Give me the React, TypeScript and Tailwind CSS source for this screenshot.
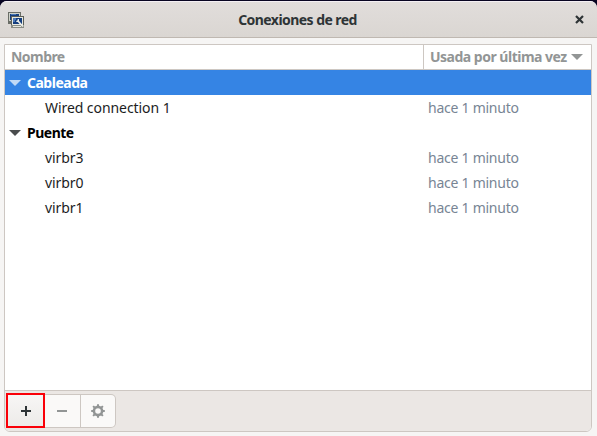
function Triangle({ className }: { className: string }) {
  return (
    <svg width="12" height="6" viewBox="0 0 12 6" className={className} fill="currentColor">
      <path d="M0 0h12L6 6z" />
    </svg>
  );
}

function NetworkIcon() {
  return (
    <svg width="16" height="16" viewBox="0 0 16 16">
      <path fill="#6a6d66" d="M0 0h13v10H3v2H0z" />
      <path fill="#cfd2ca" d="M1 1h11v8H1z" />
      <path fill="#153e7e" d="M2 2h9v6H2z" />
      <path fill="#4a78b8" d="M3 2h5v1H3z" />
      <path fill="#5c5f58" d="M3 4h13v9H3z" />
      <path fill="#8a8d85" d="M3 13h13v3H3z" />
      <path fill="#e6e8e1" d="M4 5h11v8H4zM5 14h8v1H5z" />
      <path fill="#153e7e" d="M5 6h9v6H5z" />
      <path fill="#4a78b8" d="M5 6h3v2H7v2H5z" />
      <path fill="none" stroke="#eef0ea" strokeWidth="1.8" d="M9.5 8.5l5.5 6" />
      <path fill="none" stroke="#eef0ea" strokeWidth="1.3" d="M8.3 9.3h2V7" />
    </svg>
  );
}

function GearIcon() {
  return (
    <svg width="14" height="14" viewBox="-7 -7 14 14" fill="none" stroke="#929595">
      <circle r="4.1" strokeWidth="2.6" />
      <path
        strokeWidth="2"
        d="M0-4.5V-6.8M0 4.5V6.8M-4.5 0H-6.8M4.5 0H6.8M-3.2-3.2l-1.7-1.7M3.2-3.2l1.7-1.7M-3.2 3.2l-1.7 1.7M3.2 3.2l1.7 1.7"
      />
    </svg>
  );
}

function Group({ name, selected }: { name: string; selected?: boolean }) {
  return (
    <div className={`flex h-[25px] items-center pl-1 font-bold ${selected ? "bg-[#3584e4] text-white" : "text-black"}`}>
      <Triangle className={selected ? "text-[#c0d9f6]" : "text-[#4a4d4e]"} />
      <span className="ml-[6px] tracking-[-0.5px]">{name}</span>
    </div>
  );
}

function Connection({ name }: { name: string }) {
  return (
    <div className="flex h-[25px] items-center">
      <span className="w-[423px] pl-10 tracking-[-0.07px]">{name}</span>
      <span className="tracking-[-0.25px] text-[#788594]">hace 1 minuto</span>
    </div>
  );
}

export default function App() {
  return (
    <div className="h-[436px] w-[597px] overflow-hidden bg-[#080421] pt-px font-['Noto_Sans','Open_Sans',sans-serif] text-[14px] text-[#1b1d1e]">
      <div className="h-[435px] overflow-hidden rounded-t-[7px] bg-[#f6f5f4]">
        <header className="grid h-[37px] grid-cols-[40px_1fr_40px] items-center border-t border-b border-t-[#f4eff4] border-b-[#bfb8b1] bg-linear-to-b from-[#e1dddb] to-[#dad6d2]">
          <div className="pl-2"><NetworkIcon /></div>
          <h1 className="pr-[2px] text-center font-bold tracking-[-0.55px] text-[#2e3436]">Conexiones de red</h1>
          <div className="flex justify-end pr-[13px]">
            <svg width="9" height="9" viewBox="0 0 9 9" stroke="#2e3436" strokeWidth="2.2"><path d="M1 1l7 7M8 1L1 8" /></svg>
          </div>
        </header>

        <main className="mx-1 mt-[6px] flex h-[388px] w-[588px] flex-col overflow-hidden rounded-b-[6px] border border-[#cdc7c2] bg-white">
          <div className="flex h-[25px] shrink-0 border-b border-[#cdc7c2] font-bold text-[#929595]">
            <div className="flex w-[419px] items-center border-r border-[#cdc7c2] pb-px pl-[6px] tracking-[-0.55px]">Nombre</div>
            <div className="flex items-center pb-px pl-[6px]">
              <span className="w-[137px] whitespace-nowrap tracking-[-0.5px]">Usada por última vez</span>
              <Triangle className="ml-1" />
            </div>
          </div>
          <div className="flex-1">
            <Group name="Cableada" selected />
            <Connection name="Wired connection 1" />
            <Group name="Puente" />
            <Connection name="virbr3" />
            <Connection name="virbr0" />
            <Connection name="virbr1" />
          </div>
          <footer className="flex h-[41px] shrink-0 border-t border-[#cdc7c2] bg-[#ebe7e4] pt-[2px] pl-px">
            <div className="z-10 flex h-[35px] w-[39px] items-center justify-center border-2 border-[#fa0008] bg-linear-to-b from-[#f7f6f5] to-[#edebe9]">
              <svg width="10" height="10" viewBox="0 0 10 10" fill="#2e3436"><path d="M4 0h2v4h4v2H6v4H4V6H0V4h4z" /></svg>
            </div>
            <div className="mt-px flex h-[34px] w-9 items-center justify-center border-y border-r border-[#cdc7c2] bg-[#faf9f8] pr-px">
              <div className="h-[2px] w-[10px] bg-[#929595]" />
            </div>
            <div className="mt-px flex h-[34px] w-[35px] items-center justify-center rounded-r-[5px] border-y border-r border-[#cdc7c2] bg-[#faf9f8]">
              <GearIcon />
            </div>
          </footer>
        </main>
      </div>
    </div>
  );
}
